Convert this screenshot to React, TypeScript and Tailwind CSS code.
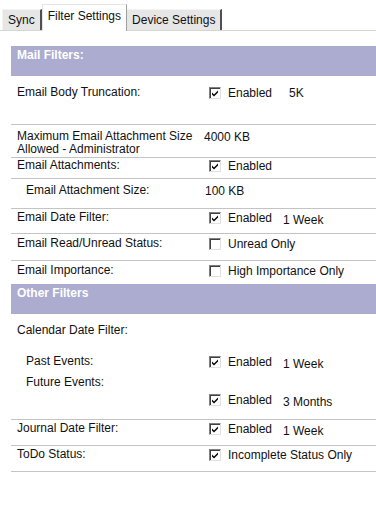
import React from "react";

type Row = {
  label: string;
  indent?: boolean;
  h: string;
  pt: string;
  border?: boolean;
  value?: React.ReactNode;
  valueMt?: string;
};

function Check({ checked }: { checked: boolean }) {
  return (
    <span className="ml-[5px] mt-[1px] inline-flex h-[12px] w-[12px] shrink-0 items-center justify-center border-t border-l border-t-[#808080] border-l-[#808080] border-b border-r border-b-[#e0e0e0] border-r-[#e0e0e0] bg-white shadow-[inset_1px_1px_0_#404040]">
      {checked && (
        <svg width="8" height="8" viewBox="0 0 8 8">
          <path d="M1 3.5 L3 5.5 L7 1.5 L7 3.5 L3 7.5 L1 5.5 Z" fill="#000" />
        </svg>
      )}
    </span>
  );
}

function CheckValue({ checked, text, extra, extraClass }: { checked: boolean; text: string; extra?: string; extraClass?: string }) {
  return (
    <div className="flex items-start">
      <Check checked={checked} />
      <span className={`ml-[7px] ${extra ? "w-[55px]" : ""}`}>{text}</span>
      {extra && <span className={`mt-[2px] ${extraClass ?? ""}`}>{extra}</span>}
    </div>
  );
}

const mailRows: Row[] = [
  { label: "Email Body Truncation:", h: "h-[49px]", pt: "pt-[10px]", border: true, value: <CheckValue checked text="Enabled" extra="5K" extraClass="ml-[6px] !mt-0" /> },
  { label: "Maximum Email Attachment Size Allowed - Administrator", h: "h-[33px]", pt: "pt-[5px]", border: true, value: <span>4000 KB</span> },
  { label: "Email Attachments:", h: "h-[21px]", pt: "pt-[1px]", border: true, value: <CheckValue checked text="Enabled" /> },
  { label: "Email Attachment Size:", indent: true, h: "h-[30px]", pt: "pt-[5px]", border: true, value: <span className="ml-[1px]">100 KB</span> },
  { label: "Email Date Filter:", h: "h-[25px]", pt: "pt-[2px]", border: true, value: <CheckValue checked text="Enabled" extra="1 Week" /> },
  { label: "Email Read/Unread Status:", h: "h-[27px]", pt: "pt-[3px]", border: true, value: <CheckValue checked={false} text="Unread Only" /> },
  { label: "Email Importance:", h: "h-[23px]", pt: "pt-[3px]", value: <CheckValue checked={false} text="High Importance Only" /> },
];

const otherRows: Row[] = [
  { label: "Calendar Date Filter:", h: "h-[25px]", pt: "pt-[10px]" },
  { label: "Past Events:", indent: true, h: "h-[32px]", pt: "pt-[16px]", value: <CheckValue checked text="Enabled" extra="1 Week" /> },
  { label: "Future Events:", indent: true, h: "h-[49px]", pt: "pt-[5px]", border: true, valueMt: "mt-[17px]", value: <CheckValue checked text="Enabled" extra="3 Months" /> },
  { label: "Journal Date Filter:", h: "h-[26px]", pt: "pt-[2px]", border: true, value: <CheckValue checked text="Enabled" extra="1 Week" /> },
  { label: "ToDo Status:", h: "h-[26px]", pt: "pt-[2px]", border: true, value: <CheckValue checked text="Incomplete Status Only" /> },
];

function Rows({ rows }: { rows: Row[] }) {
  return (
    <>
      {rows.map((r) => (
        <div
          key={r.label}
          className={`flex items-start ${r.h} ${r.pt} ${r.border ? "border-b border-[#c4c4c4]" : ""}`}
        >
          <div className={`w-[193px] shrink-0 leading-[13px] ${r.indent ? "pl-[15px]" : "pl-[6px]"}`}>{r.label}</div>
          <div className={`leading-[14px] ${r.valueMt ?? ""}`}>{r.value}</div>
        </div>
      ))}
    </>
  );
}

function Header({ title }: { title: string }) {
  return (
    <div className="h-[30px] bg-[#acacd0] pl-[6px] pt-[2px] font-bold leading-[14px] text-white">{title}</div>
  );
}

export default function App() {
  return (
    <div className="h-[506px] w-[376px] overflow-hidden bg-white font-['Liberation_Sans',Arial,sans-serif] text-[12px] text-[#111]">
      {/* tab strip */}
      <div className="flex h-[31px] items-end border-b border-[#d8d6cc] pl-[2px]">
        <div className="flex h-[21px] items-center border-t border-l border-[#f4f4f4] border-r-2 border-r-[#505050] bg-[#e6e6e6] px-[5px] text-[12px]">
          Sync
        </div>
        <div className="-mb-px flex h-[27px] items-center border-t border-l border-[#e4e4e4] border-r border-r-[#a0a0a0] bg-white px-[5px] pb-[4px] text-[12px]">
          Filter Settings
        </div>
        <div className="flex h-[21px] items-center border-t border-[#f4f4f4] border-r-2 border-r-[#505050] bg-[#e6e6e6] px-[5px] text-[12px]">
          Device Settings
        </div>
      </div>

      <div className="ml-[11px] mt-[15px]">
        <Header title="Mail Filters:" />
        <Rows rows={mailRows} />
        <Header title="Other Filters" />
        <Rows rows={otherRows} />
      </div>
    </div>
  );
}
